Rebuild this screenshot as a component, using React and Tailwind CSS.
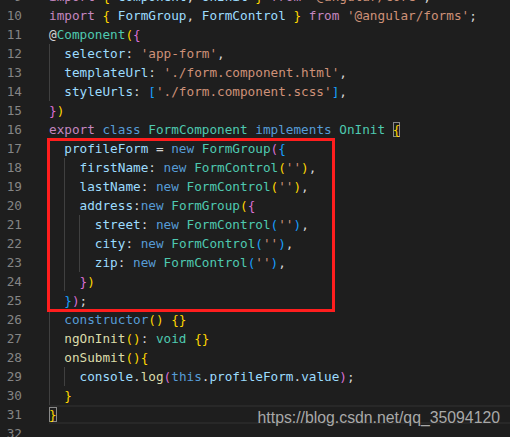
import React from 'react'

// Dark+ token colours
const K = 'text-[#c586c0]'
const S = 'text-[#569cd6]'
const T = 'text-[#4ec9b0]'
const V = 'text-[#9cdcfe]'
const Q = 'text-[#ce9178]'
const F = 'text-[#dcdcaa]'
const P = 'text-[#d4d4d4]'
const B1 = 'text-[#ffd700]'
const B2 = 'text-[#da70d6]'
const B3 = 'text-[#179fff]'
const BOX = 'text-[#ffd700] shadow-[inset_0_0_0_1px_#8a8a8a]'

const guideLeft = {
  0: 'left-0',
  2: 'left-[15px]',
  4: 'left-[30px]',
}

const lines = [
  { n: 9, guides: [], t: [[K, 'import'], [P, ' '], [B1, '{'], [V, ' Component'], [P, ', '], [V, 'OnInit '], [B1, '}'], [P, ' '], [K, 'from'], [P, ' '], [Q, "'@angular/core'"], [P, ';']] },
  { n: 10, guides: [], t: [[K, 'import'], [P, ' '], [B1, '{'], [V, ' FormGroup'], [P, ', '], [V, 'FormControl '], [B1, '}'], [P, ' '], [K, 'from'], [P, ' '], [Q, "'@angular/forms'"], [P, ';']] },
  { n: 11, guides: [], t: [[P, '@'], [T, 'Component'], [B1, '('], [B2, '{']] },
  { n: 12, guides: [0], t: [[P, '  '], [V, 'selector'], [P, ': '], [Q, "'app-form'"], [P, ',']] },
  { n: 13, guides: [0], t: [[P, '  '], [V, 'templateUrl'], [P, ': '], [Q, "'./form.component.html'"], [P, ',']] },
  { n: 14, guides: [0], t: [[P, '  '], [V, 'styleUrls'], [P, ': '], [B3, '['], [Q, "'./form.component.scss'"], [B3, ']'], [P, ',']] },
  { n: 15, guides: [], t: [[B2, '}'], [B1, ')']] },
  { n: 16, guides: [], t: [[K, 'export'], [P, ' '], [S, 'class'], [P, ' '], [T, 'FormComponent'], [P, ' '], [S, 'implements'], [P, ' '], [T, 'OnInit'], [P, ' '], [BOX, '{']] },
  { n: 17, guides: [0], t: [[P, '  '], [V, 'profileForm'], [P, ' = '], [S, 'new'], [P, ' '], [T, 'FormGroup'], [B2, '('], [B3, '{']] },
  { n: 18, guides: [0, 2], t: [[P, '    '], [V, 'firstName'], [P, ': '], [S, 'new'], [P, ' '], [T, 'FormControl'], [B1, '('], [Q, "''"], [B1, ')'], [P, ',']] },
  { n: 19, guides: [0, 2], t: [[P, '    '], [V, 'lastName'], [P, ': '], [S, 'new'], [P, ' '], [T, 'FormControl'], [B1, '('], [Q, "''"], [B1, ')'], [P, ',']] },
  { n: 20, guides: [0, 2], t: [[P, '    '], [V, 'address'], [P, ':'], [S, 'new'], [P, ' '], [T, 'FormGroup'], [B1, '('], [B2, '{']] },
  { n: 21, guides: [0, 2, 4], t: [[P, '      '], [V, 'street'], [P, ': '], [S, 'new'], [P, ' '], [T, 'FormControl'], [B3, '('], [Q, "''"], [B3, ')'], [P, ',']] },
  { n: 22, guides: [0, 2, 4], t: [[P, '      '], [V, 'city'], [P, ': '], [S, 'new'], [P, ' '], [T, 'FormControl'], [B3, '('], [Q, "''"], [B3, ')'], [P, ',']] },
  { n: 23, guides: [0, 2, 4], t: [[P, '      '], [V, 'zip'], [P, ': '], [S, 'new'], [P, ' '], [T, 'FormControl'], [B3, '('], [Q, "''"], [B3, ')'], [P, ',']] },
  { n: 24, guides: [0, 2], t: [[P, '    '], [B2, '}'], [B1, ')']] },
  { n: 25, guides: [0], t: [[P, '  '], [B3, '}'], [B2, ')'], [P, ';']] },
  { n: 26, guides: [0], t: [[P, '  '], [S, 'constructor'], [B1, '()'], [P, ' '], [B1, '{}']] },
  { n: 27, guides: [0], t: [[P, '  '], [F, 'ngOnInit'], [B1, '()'], [P, ': '], [T, 'void'], [P, ' '], [B1, '{}']] },
  { n: 28, guides: [0], t: [[P, '  '], [F, 'onSubmit'], [B1, '()'], [B1, '{']] },
  { n: 29, guides: [0, 2], t: [[P, '    '], [V, 'console'], [P, '.'], [F, 'log'], [B2, '('], [S, 'this'], [P, '.'], [V, 'profileForm'], [P, '.'], [V, 'value'], [B2, ')'], [P, ';']] },
  { n: 30, guides: [0], t: [[P, '  '], [B1, '}']] },
  { n: 31, guides: [], current: true, t: [[BOX, '}']] },
  { n: 32, guides: [], t: [] },
]

const Line = ({ line }) => (
  <div className="flex h-[19px] leading-[19px]">
    <div className="w-[49px] shrink-0 pr-[27px] text-right text-[#858585]">{line.n}</div>
    <div
      className={`relative flex-1 whitespace-pre ${
        line.current ? 'border-y-2 border-[#282828] leading-[15px]' : ''
      }`}
    >
      {line.guides.map((g) => (
        <span key={g} className={`absolute top-0 h-[19px] w-px bg-[#404040] ${guideLeft[g]}`} />
      ))}
      {line.t.map(([cls, text], i) => (
        <span key={i} className={`relative ${cls}`}>
          {text}
        </span>
      ))}
    </div>
  </div>
)

export default function App() {
  return (
    <div className="relative h-[437px] w-[510px] overflow-hidden bg-[#1e1e1e] font-['DejaVu_Sans_Mono','Liberation_Mono',monospace] text-[12.7px]">
      <div className="-mt-[13px]">
        {lines.map((line) => (
          <Line key={line.n} line={line} />
        ))}
      </div>

      {/* highlight box drawn over the form group */}
      <div className="pointer-events-none absolute left-[47px] top-[138px] h-[174px] w-[288px] border-[3px] border-[#ff1e1e]" />

      {/* watermark */}
      <div className="pointer-events-none absolute right-[10px] top-[408px] font-['Liberation_Sans',Arial,sans-serif] text-[15.8px] leading-[20px] text-[#a9a9a9]">
        https://blog.csdn.net/qq_35094120
      </div>
    </div>
  )
}
